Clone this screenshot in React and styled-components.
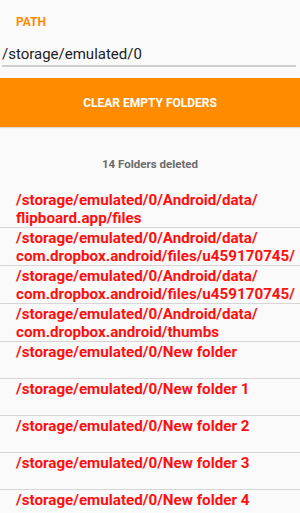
import styled, { createGlobalStyle } from "styled-components";

const folders = [
  "/storage/emulated/0/Android/data/flipboard.app/files",
  "/storage/emulated/0/Android/data/com.dropbox.android/files/u459170745/",
  "/storage/emulated/0/Android/data/com.dropbox.android/files/u459170745/",
  "/storage/emulated/0/Android/data/com.dropbox.android/thumbs",
  "/storage/emulated/0/New folder",
  "/storage/emulated/0/New folder 1",
  "/storage/emulated/0/New folder 2",
  "/storage/emulated/0/New folder 3",
  "/storage/emulated/0/New folder 4",
];

// break the long paths where android wraps them
const splitPath = (path) => {
  const marker = "/Android/data/";
  const i = path.indexOf(marker);
  if (i === -1) return [path];
  return [path.slice(0, i + marker.length), path.slice(i + marker.length)];
};

function App() {
  return (
    <>
      <GlobalStyle />
      <Screen>
        <Label>PATH</Label>
        <Field>
          <PathInput defaultValue="/storage/emulated/0" />
        </Field>
        <ClearButton>CLEAR EMPTY FOLDERS</ClearButton>
        <Status>14 Folders deleted</Status>
        <FolderList>
          {folders.map((path, key) => (
            <FolderItem key={key}>
              {splitPath(path).map((line, n) => (
                <Line key={n}>{line}</Line>
              ))}
            </FolderItem>
          ))}
        </FolderList>
      </Screen>
    </>
  );
}

const GlobalStyle = createGlobalStyle`
  body {
    margin: 0;
    background: #fafafa;
    font-family: Roboto, "Liberation Sans", sans-serif;
  }
`;

const Screen = styled.div`
  width: 300px;
  height: 513px;
  overflow: hidden;
  background: #fafafa;
`;

const Label = styled.div`
  margin-top: 16px;
  padding-left: 16px;
  height: 13px;
  line-height: 13px;
  font-size: 12px;
  font-weight: 700;
  color: #ff8c00;
`;

const Field = styled.div`
  margin: 0 4px 0 2px;
  padding-top: 15px;
  padding-bottom: 1px;
  border-bottom: 2px solid #cfcfcf;
`;

const PathInput = styled.input`
  display: block;
  width: 100%;
  border: none;
  outline: none;
  padding: 0;
  background: transparent;
  font-family: Roboto, "Liberation Sans", sans-serif;
  font-size: 15px;
  line-height: 20px;
  height: 20px;
  color: #212121;
`;

const ClearButton = styled.button`
  display: flex;
  align-items: center;
  justify-content: center;
  width: 100%;
  height: 49px;
  margin-top: 11px;
  border: none;
  padding: 0;
  background: #ff8c00;
  box-shadow: 0 1px 1px rgba(0, 0, 0, 0.12);
  color: #ffffff;
  font-family: Roboto, "Liberation Sans", sans-serif;
  font-size: 12px;
  font-weight: 700;
`;

const Status = styled.div`
  margin-top: 30px;
  text-align: center;
  line-height: 14px;
  font-size: 11.5px;
  font-weight: 700;
  color: #6b6b6b;
`;

const FolderList = styled.div`
  margin-top: 19px;
`;

const FolderItem = styled.div`
  min-height: 37px;
  box-sizing: border-box;
  padding: 2px 0 0 16px;
  border-bottom: 1px solid #d6d6d6;
`;

const Line = styled.div`
  font-size: 15.2px;
  line-height: 17.5px;
  font-weight: 700;
  color: #ff1010;
  white-space: nowrap;
`;

export default App;
